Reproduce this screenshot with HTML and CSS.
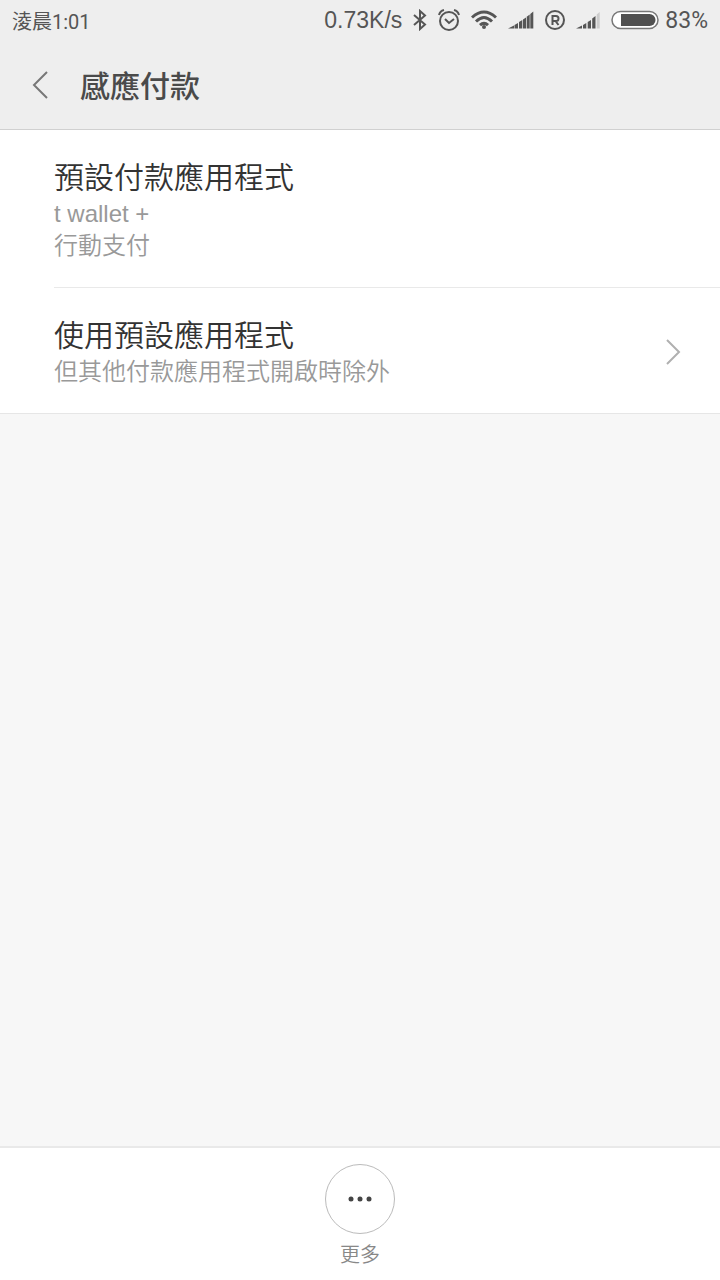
FILE: index.html
```html
<!DOCTYPE html>
<html lang="zh-Hant">
<head>
<meta charset="UTF-8">
<meta name="viewport" content="width=device-width, initial-scale=1">
<title>感應付款</title>
<link rel="stylesheet" href="styles.css">
</head>
<body>

<!-- status bar + title -->
<header class="top">
  <div class="status">
    <span class="clock">淩晨1:01</span>
    <span class="speed">0.73K/s</span>
    <svg width="14" height="22" viewBox="0 0 14 22" fill="none" stroke="#555" stroke-width="2">
      <path d="M1 6l11 9.5L7 20V2l5 4.5L1 16"/>
    </svg>
    <svg width="22" height="22" viewBox="0 0 22 22" fill="none" stroke="#555" stroke-width="2">
      <circle cx="11" cy="12" r="9"/>
      <path d="M7 10l4 4 5-4M1 6q1-4 5-5M21 6q-1-4-5-5"/>
    </svg>
    <svg width="26" height="22" viewBox="0 0 26 22" fill="none" stroke="#555" stroke-width="3">
      <path d="M1 8.500Q13-2.500 25 8.500M5 12.500Q13 4.500 21 12.500M9 16.200Q13 12.500 17 16.200"/>
      <circle cx="13" cy="18" r="2" fill="#555" stroke="none"/>
    </svg>
    <svg width="26" height="22" viewBox="0 0 26 22" fill="#555">
      <path d="M0 19.500L6 16.500V19.500zM6.500 16l3.500-2v5.500H6.500zM11 13l3.300-2v8.500H11zM15 10.500l3-2v11h-3zM18.700 7.800l3-2.300v14h-3zM22.300 5l3-2.500v17h-3z"/>
    </svg>
    <svg width="20" height="22" viewBox="0 0 20 22" fill="none" stroke="#555" stroke-width="2">
      <circle cx="10" cy="11" r="9"/>
      <path d="M7.500 16V7H11a2.300 2.300 0 0 1 0 5H7.500M10.500 12l3 4"/>
    </svg>
    <svg width="24" height="22" viewBox="0 0 24 22" fill="#555">
      <path d="M0 19.500L6 16.500V19.500zM7 16l3.300-2v5.500H7zM11.700 13l3.300-2v8.500h-3.300zM16.200 9.500l3.300-2.500v12.500h-3.300z"/>
      <path d="M20.700 5.500l3-2.500v16.500h-3z" fill="#ccc"/>
    </svg>
    <span class="battery">
      <svg width="48" height="22" viewBox="0 0 48 22">
        <rect x="1" y="2.500" width="46" height="17" rx="8.500" fill="#fff" stroke="#777" stroke-width="1.500"/>
        <path d="M10 5h28.500a6 6 0 0 1 0 12H10z" fill="#505050"/>
      </svg>
      83%
    </span>
  </div>
  <div class="titlebar">
    <button class="back" aria-label="返回">
      <svg width="18" height="30" viewBox="0 0 18 30" fill="none" stroke="#777" stroke-width="2">
        <path d="M15 2L2 15l13 13"/>
      </svg>
    </button>
    <h1>感應付款</h1>
  </div>
</header>

<!-- settings -->
<main>
  <ul class="list">
    <li>
      <button class="item">
        <span class="text">
          <span class="name">預設付款應用程式</span>
          <span class="desc">t wallet +<br>行動支付</span>
        </span>
      </button>
    </li>
    <li>
      <button class="item">
        <span class="text">
          <span class="name">使用預設應用程式</span>
          <span class="desc">但其他付款應用程式開啟時除外</span>
        </span>
        <svg width="16" height="26" viewBox="0 0 16 26" fill="none" stroke="#b0b0b0" stroke-width="2">
          <path d="M2 1l12 12L2 25"/>
        </svg>
      </button>
    </li>
  </ul>
</main>

<!-- bottom bar -->
<footer class="bottom">
  <button class="more">
    <span class="circle">
      <svg width="26" height="6" viewBox="0 0 26 6" fill="#444">
        <circle cx="4" cy="3" r="2.500"/>
        <circle cx="13" cy="3" r="2.500"/>
        <circle cx="22" cy="3" r="2.500"/>
      </svg>
    </span>
    更多
  </button>
</footer>

</body>
</html>
```

FILE: styles.css
```css
*{box-sizing:border-box}
body{
  margin:0;min-height:100vh;
  display:flex;flex-direction:column;
  font-family:"Liberation Sans","Noto Sans CJK TC",sans-serif;
  background:#f7f7f7;color:#333}
button{
  padding:0;border:none;background:none;
  font:inherit;color:inherit;cursor:pointer}
svg{display:block;flex:none}

/* top */
.top{background:#eee;border-bottom:1px solid #d0d0d0}
.status{
  display:flex;align-items:center;gap:11px;
  height:40px;padding:0 12px;
  font-size:23px;color:#555}
.clock{
  margin-right:auto;font-size:20px;
  font-family:Roboto,"Noto Sans CJK TC",sans-serif}
.battery{
  display:flex;align-items:center;gap:6px;
  font-family:Roboto,sans-serif}
.titlebar{
  display:flex;align-items:center;gap:30px;
  height:89px;padding:0 32px}
.titlebar h1{
  margin:0;padding-top:4px;
  font-size:30px;line-height:42px;
  font-weight:500;color:#4a4a4a}

/* list */
main{flex:1}
.list{
  margin:0;padding:0;list-style:none;
  background:#fff;border-bottom:1px solid #e6e6e6}
.list li{padding-left:54px}
.item{
  display:flex;align-items:center;justify-content:space-between;
  width:100%;padding:28px 39px 25px 0;text-align:left}
li + li .item{border-top:1px solid #e9e9e9}
.name,.desc{display:block}
.name{font-size:30px;line-height:40px;font-weight:350}
.desc{
  font-size:24px;line-height:32px;font-weight:350;color:#999}

/* bottom */
.bottom{
  display:flex;justify-content:center;
  padding:16px 0 10px;
  background:#fff;border-top:2px solid #e9e9e9}
.more{
  display:flex;flex-direction:column;align-items:center;gap:6px;
  font-size:20px;line-height:30px;font-weight:350;color:#888}
.circle{
  display:flex;align-items:center;justify-content:center;
  width:70px;height:70px;
  border:1px solid #bbb;border-radius:50%}
```
